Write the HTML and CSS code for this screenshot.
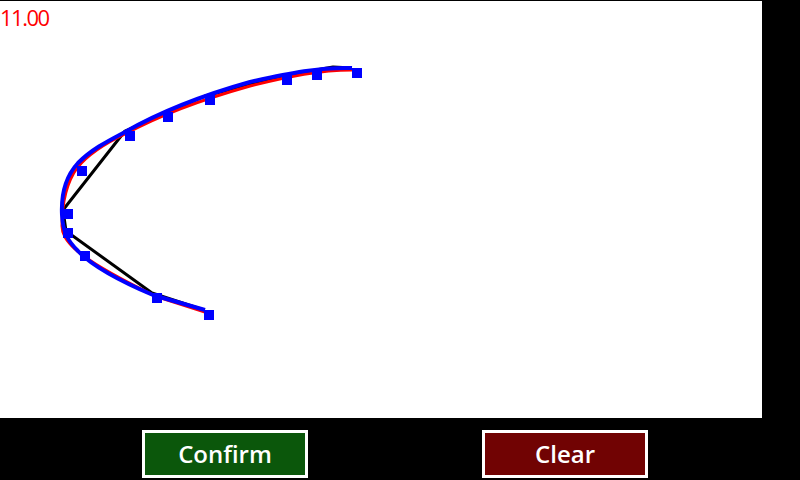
FILE: index.html
```html
<!DOCTYPE html>
<html>
<head>
<meta charset="utf-8">
<link rel="stylesheet" href="styles.css">
</head>
<body>
<div class="screen">
  <div class="canvas">
    <svg class="drawing" viewBox="0 1 762 417" width="762" height="417">
      <polyline class="raw" points="204,310 152,293 66,231 63,210 125,131 205,96 282,76 333,67 352,68"/>
      <path class="fit" d="M205,312 L155,296 C120,279 88,261 75,249 C66,240 62,234 62,226 C62,201 67,182 77,168 C90,152 108,142 125,134 C160,115 200,100 250,86 C290,76 320,70 352,70"/>
      <path class="smooth" d="M205,310 L153,295 C120,281 92,266 78,251 C68,241 63,233 62,215 C61,195 66,176 78,163 C92,149 108,141 125,132 C160,112 200,96 250,82 C290,73 320,67 352,68"/>
      <g class="pts">
        <rect x="352" y="68" width="10" height="10"/>
        <rect x="312" y="70" width="10" height="10"/>
        <rect x="282" y="75" width="10" height="10"/>
        <rect x="205" y="95" width="10" height="10"/>
        <rect x="163" y="112" width="10" height="10"/>
        <rect x="125" y="131" width="10" height="10"/>
        <rect x="77" y="166" width="10" height="10"/>
        <rect x="63" y="209" width="10" height="10"/>
        <rect x="63" y="228" width="10" height="10"/>
        <rect x="80" y="251" width="10" height="10"/>
        <rect x="152" y="293" width="10" height="10"/>
        <rect x="204" y="310" width="10" height="10"/>
      </g>
    </svg>
    <div class="value">11.00</div>
  </div>
  <div class="toolbar">
    <button class="btn confirm">Confirm</button>
    <button class="btn clear">Clear</button>
  </div>
</div>
</body>
</html>
```
FILE: styles.css
```css
html, body {
  margin: 0;
  padding: 0;
  background: #000;
}
.screen {
  width: 800px;
  height: 480px;
  padding-top: 1px;
  box-sizing: border-box;
  background: #000;
  overflow: hidden;
}
.canvas {
  position: relative;
  width: 762px;
  height: 417px;
  background: #fff;
}
.drawing {
  display: block;
}
.raw {
  fill: none;
  stroke: #000;
  stroke-width: 3;
  stroke-linejoin: round;
}
.fit {
  fill: none;
  stroke: #ff0000;
  stroke-width: 3;
}
.smooth {
  fill: none;
  stroke: #0000ff;
  stroke-width: 4;
}
.pts rect {
  fill: #0000ff;
}
.value {
  position: absolute;
  left: 0;
  top: 1px;
  font-family: "Open Sans", "Noto Sans", sans-serif;
  font-size: 22px;
  letter-spacing: -1.5px;
  line-height: 30px;
  color: #ff0000;
}
.toolbar {
  display: flex;
  gap: 174px;
  padding: 12px 0 0 142px;
}
.btn {
  width: 166px;
  height: 48px;
  box-sizing: border-box;
  border: 3px solid #fff;
  margin: 0;
  padding: 0;
  color: #fff;
  font-family: "Open Sans", "Noto Sans", sans-serif;
  font-weight: 600;
  font-size: 24px;
  line-height: 40px;
}
.confirm {
  background: #0b570b;
}
.clear {
  background: #710303;
}
```
